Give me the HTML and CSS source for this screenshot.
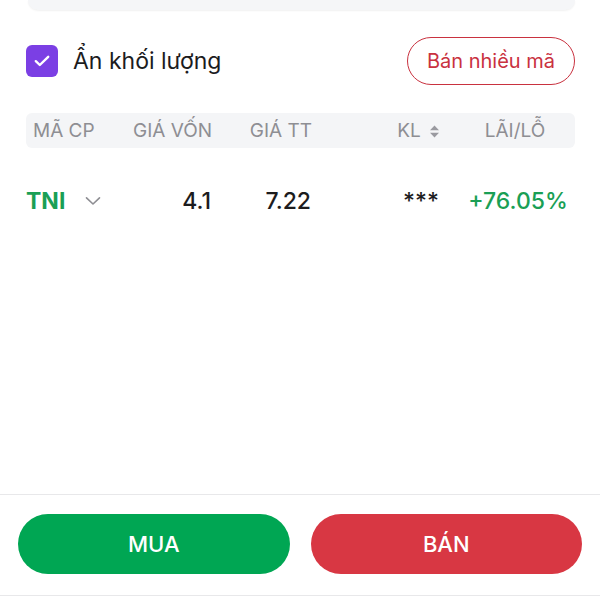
FILE: index.html
```html
<!DOCTYPE html>
<html lang="vi">
<head>
  <meta charset="UTF-8" />
  <meta name="viewport" content="width=device-width, initial-scale=1.0" />
  <title>Danh mục</title>
  <link rel="stylesheet" href="styles.css">
</head>
<body>

  <div class="screen">
    <!-- bottom edge of the summary card above -->
    <div class="top-card"></div>

    <div class="toolbar">
      <label class="hide-volume">
        <span class="check">
          <svg width="20" height="20" viewBox="0 0 20 20"><path d="M3.8 10.2l4 3.8 8.4-8.2" fill="none" stroke="#fff" stroke-width="2.4" stroke-linecap="round" stroke-linejoin="round"/></svg>
        </span>
        Ẩn khối lượng
      </label>
      <button class="btn-multi">Bán nhiều mã</button>
    </div>

    <!-- Holdings table -->
    <div class="table-head">
      <span class="col-code">MÃ CP</span>
      <span class="col-num">GIÁ VỐN</span>
      <span class="col-num">GIÁ TT</span>
      <span class="col-num">KL
        <svg class="sort" width="11" height="13" viewBox="0 0 11 13"><path d="M5.5 0.5L10 5.2H1z M5.5 12.5L10 7.8H1z" fill="#9a9aa0"/></svg>
      </span>
      <span class="col-pnl">LÃI/LỖ</span>
    </div>

    <div class="table-row">
      <span class="col-code code">TNI
        <svg class="chev" width="16" height="10" viewBox="0 0 16 10"><path d="M1.5 1.8L8 8l6.5-6.2" fill="none" stroke="#8e8e93" stroke-width="1.6" stroke-linecap="round" stroke-linejoin="round"/></svg>
      </span>
      <span class="col-num">4.1</span>
      <span class="col-num">7.22</span>
      <span class="col-num">***</span>
      <span class="col-pnl up">+76.05%</span>
    </div>

    <div class="spacer"></div>

    <div class="footer">
      <button class="btn-trade buy">MUA</button>
      <button class="btn-trade sell">BÁN</button>
    </div>
  </div>

</body>
</html>
```

FILE: styles.css
```css
body {
  margin: 0;
  background: #fff;
  font-family: Inter, "Noto Sans", sans-serif;
  color: #1c1c1e;
}
.screen {
  height: 600px;
  display: flex;
  flex-direction: column;
}
.top-card {
  height: 10px;
  margin: 0 25px 0 28px;
  background: #f5f6f8;
  border-radius: 0 0 12px 12px;
  box-shadow: 0 1px 2px rgba(0, 0, 0, 0.06);
}
.toolbar {
  display: flex;
  justify-content: space-between;
  align-items: center;
  margin: 27px 25px 0 26px;
  height: 48px;
}
.hide-volume {
  display: flex;
  align-items: center;
  gap: 15px;
  font-size: 23px;
  color: #1c1c1e;
}
.check {
  width: 32px;
  height: 32px;
  border-radius: 6px;
  background: #7b3fe4;
  display: flex;
  align-items: center;
  justify-content: center;
}
.btn-multi {
  height: 48px;
  padding: 0 19px;
  border: 1.5px solid #c9323f;
  border-radius: 24px;
  background: #fff;
  color: #c9323f;
  font-family: Inter, sans-serif;
  font-size: 20px;
}
.table-head, .table-row {
  display: grid;
  grid-template-columns: 94px 92px 100px 128px 1fr;
  align-items: center;
  margin: 0 25px 0 26px;
}
.table-head {
  margin-top: 28px;
  height: 35px;
  background: #f4f5f7;
  border-radius: 6px;
  font-size: 19px;
  color: #8e8e93;
}
.table-head .col-code {
  padding-left: 7px;
}
.table-row {
  height: 105px;
  font-size: 23px;
  font-weight: 500;
}
.col-num {
  text-align: right;
  white-space: nowrap;
}
.table-row .col-num {
  padding-right: 1px;
}
.col-pnl {
  text-align: center;
  padding-left: 15px;
}
.table-row .col-pnl {
  padding-left: 21px;
}
.sort {
  vertical-align: -1px;
  margin-left: 3px;
}
.code {
  color: #1a9f55;
  font-weight: 700;
  display: flex;
  align-items: center;
  gap: 20px;
}
.up {
  color: #1a9f55;
}
.spacer {
  flex: 1;
}
.footer {
  border-top: 1px solid #e8e8ea;
  border-bottom: 1px solid #e8e8ea;
  padding: 19px 18px 21px;
  display: grid;
  grid-template-columns: 1fr 1fr;
  gap: 21px;
  margin-bottom: 4px;
}
.btn-trade {
  height: 60px;
  border: none;
  border-radius: 30px;
  color: #fff;
  font-family: Inter, sans-serif;
  font-size: 22px;
  font-weight: 500;
}
.buy {
  background: #00a653;
}
.sell {
  background: #d83743;
}
```
